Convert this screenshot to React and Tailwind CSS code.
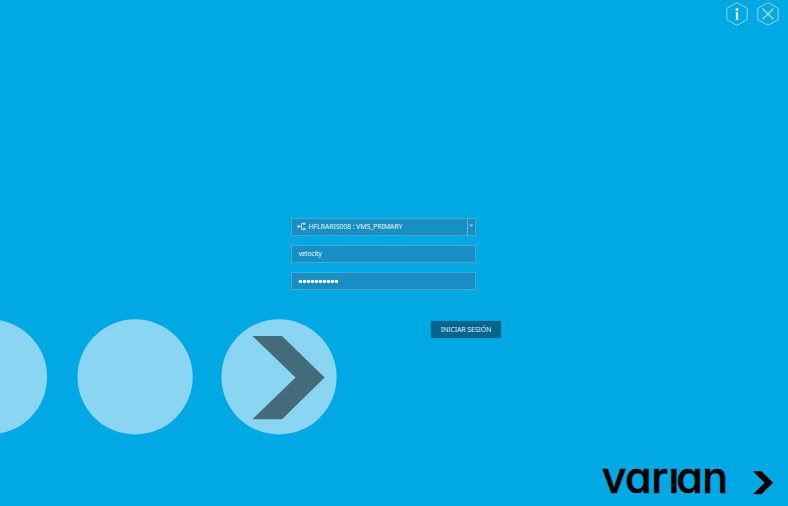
import React from 'react';

function HexButton({ label, children }) {
  return (
    <button aria-label={label} className="block h-6 w-[22px]">
      <svg viewBox="0 0 22 24" className="h-6 w-[22px]" fill="none">
        <path d="M11 .7 21.2 6.3V17.700L11 23.300.8 17.700V6.300Z" stroke="#8ed7f3" strokeWidth="1" />
        {children}
      </svg>
    </button>
  );
}

function Header() {
  return (
    <header className="flex h-7 justify-end gap-[9.5px] pt-[2px] pr-[9px]">
      <HexButton label="Info">
        <path d="M9.300 10.300H11M9.300 17.800H12.700" stroke="#a8e0f6" strokeWidth="0.8" />
        <path d="M11 10V18" stroke="#e4f6fd" strokeWidth="2.200" />
        <circle cx="11" cy="7.500" r="1.500" fill="#e4f6fd" />
      </HexButton>
      <HexButton label="Cerrar">
        <path d="M5.500 6.500 16.500 17.500M16.500 6.500 5.500 17.500" stroke="#b5e4f7" strokeWidth="1.100" />
      </HexButton>
    </header>
  );
}

const field =
  'flex h-[18px] w-[185px] items-center border border-[#4ba9d1] bg-[#188fc2] text-[7px] leading-[14px] text-[#e2f3fb]';

function LoginForm() {
  return (
    <form className="mt-[190px] ml-[291px] flex flex-col gap-[9px]">
      <div className={field}>
        <svg viewBox="0 0 9 9" className="mb-[1px] ml-[5px] h-[9px] w-[9px]" fill="none" stroke="#b9deef" strokeWidth="0.8">
          <path d="M2 4.500H4.500M6 1.500H4.500V7.500H6M4.500 1.500V7.500" />
          <path d="M.5 3.500H2.500V5.500H.5ZM6 .7H8.300V2.500H6ZM6 6H8.300V8H6Z" fill="#b9deef" strokeWidth="0.3" />
        </svg>
        <span className="ml-[2.500px] flex-1 tracking-[-0.130px] whitespace-nowrap">HFLRARIS008 : VMS_PRIMARY</span>
        <span className="flex h-full w-2 items-center justify-center border-l border-[#5fb3d7]">
          <svg viewBox="0 0 5 4" className="mb-[2px] h-[3.500px] w-[4.500px]">
            <path d="M0 .5H5L2.500 3.500Z" fill="#8bcdec" />
          </svg>
        </span>
      </div>
      <div className={field}>
        <span className="ml-[6.500px] tracking-[-0.200px]">velocity</span>
      </div>
      <div className={field}>
        <svg viewBox="0 0 41 5" className="ml-[6px] h-[5px] w-[41px]" fill="#fff">
          {Array.from({ length: 10 }, (_, i) => (
            <circle key={i} cx={2.5 + i * 4} cy="2.5" r="1.8" />
          ))}
        </svg>
      </div>
    </form>
  );
}

function Wordmark() {
  return (
    <svg viewBox="0 0 128 26" className="h-[26px] w-32 overflow-visible" role="img" aria-label="varian">
      <text
        x="0.700 24.100 50.200 67.400 75.200 101.200"
        y="24.300"
        className="fill-black stroke-black stroke-[0.6px] font-['Inter',sans-serif] text-[43px] font-medium [font-feature-settings:'cv11'_1]"
      >
        varıan
      </text>
    </svg>
  );
}

export default function App() {
  return (
    <div className="flex h-[506px] w-[788px] flex-col overflow-hidden bg-[#00a8e4] font-['Noto_Sans',sans-serif]">
      <Header />
      <LoginForm />
      <div className="mt-[29px] flex items-start">
        <svg viewBox="0 0 337 116" className="h-[116px] w-[337px]">
          <g fill="#8ad5f2">
            <circle cx="-10.500" cy="57.900" r="57.600" />
            <circle cx="135.100" cy="57.900" r="57.600" />
            <circle cx="279" cy="57.900" r="57.600" />
          </g>
          <path d="M252.500 17H282L324.600 58.600L282 100.200H252.500L295.500 58.600Z" fill="#446b79" />
        </svg>
        <button className="mt-[2px] ml-[94px] flex h-[17px] w-[70px] items-center justify-center rounded-[1px] bg-[#03648d] text-[7px] leading-[14px] tracking-[-0.130px] whitespace-nowrap text-[#dff1f8] shadow-[0_0_1px_#03648d]">
          INICIAR SESIÓN
        </button>
      </div>
      <footer className="mt-[34px] ml-[601px] flex items-start">
        <Wordmark />
        <svg viewBox="0 0 21 25" className="mt-px ml-[24px] h-[25px] w-[21px]">
          <path d="M0 1.200H8.500L20.200 12.700L8.500 24.200H0L11.500 12.700Z" fill="#000" />
        </svg>
      </footer>
    </div>
  );
}
